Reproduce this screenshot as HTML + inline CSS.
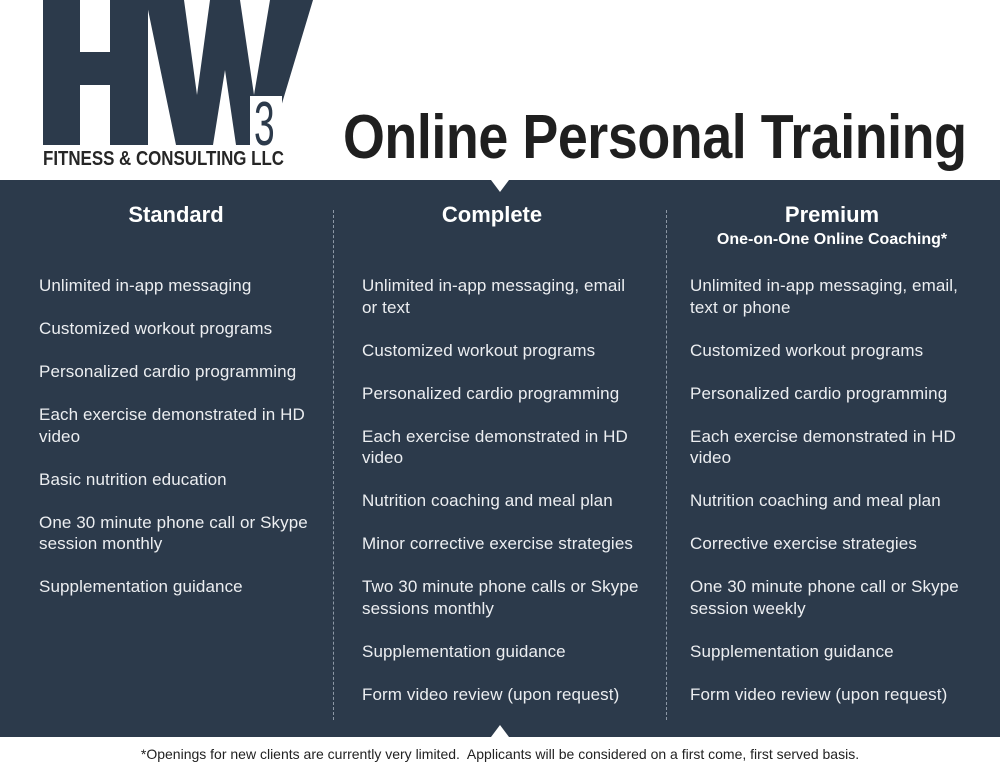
<!DOCTYPE html>
<html><head><meta charset="utf-8"><style>
*{margin:0;padding:0;box-sizing:border-box}
body{width:1000px;height:773px;background:#fff;position:relative;overflow:hidden;font-family:"Liberation Sans",sans-serif}
.band{position:absolute;left:0;top:180px;width:1000px;height:557px;background:#2c3a4b}
.tri{position:absolute;width:0;height:0;border-left:9px solid transparent;border-right:9px solid transparent}
.dash{position:absolute;top:210px;height:510px;width:0;border-left:1.5px dashed #8d98a6}
.col{position:absolute;top:275px;color:#eceef1;font-size:17px;line-height:21.5px;white-space:nowrap;letter-spacing:0.1px}
.col p{margin-bottom:21.5px}
.h{position:absolute;color:#fff;font-weight:bold;font-size:22px;text-align:center;width:300px}
.title{position:absolute;left:343px;top:102px;font-size:62px;font-weight:bold;color:#1f1f1f;transform:scaleX(0.868);transform-origin:left top;white-space:nowrap;letter-spacing:-0.5px}
.sub{position:absolute;left:43px;top:148px;font-size:20px;font-weight:bold;color:#262626;transform:scaleX(0.845);transform-origin:left top;white-space:nowrap}
.foot{position:absolute;top:746px;left:0;width:1000px;text-align:center;font-size:14px;color:#222;white-space:pre}
</style></head><body>
<svg style="position:absolute;left:0;top:0" width="340" height="150">
<g fill="#2c3a4b">
<rect x="43" y="0" width="37" height="145"/>
<rect x="110" y="0" width="38" height="145"/>
<rect x="78" y="52" width="34" height="33"/>
<polygon points="146,0 184,0 197,95 210,0 240,0 254,95 270,0 313,0 283,100 270,145 236,145 225,70 213,145 176,145"/>
</g>
<rect x="250" y="96" width="32" height="50" fill="#fff"/>
<text transform="translate(254,145) scale(0.6,1)" font-family="Liberation Sans" font-size="62" fill="#2c3a4b">3</text>
</svg>
<div class="sub">FITNESS &amp; CONSULTING LLC</div>
<div class="title">Online Personal Training</div>
<div class="band"></div>
<div class="tri" style="left:491px;top:180px;border-top:12px solid #fff"></div>
<div class="tri" style="left:491px;top:725px;border-bottom:12px solid #fff"></div>
<div class="dash" style="left:333px"></div>
<div class="dash" style="left:666px"></div>
<div class="h" style="left:26px;top:202px">Standard</div>
<div class="h" style="left:342px;top:202px">Complete</div>
<div class="h" style="left:682px;top:202px">Premium</div>
<div class="h" style="left:682px;top:231px;font-size:16px">One-on-One Online Coaching*</div>
<div class="col" style="left:39px">
<p>Unlimited in-app messaging</p>
<p>Customized workout programs</p>
<p>Personalized cardio programming</p>
<p>Each exercise demonstrated in HD<br>video</p>
<p>Basic nutrition education</p>
<p>One 30 minute phone call or Skype<br>session monthly</p>
<p>Supplementation guidance</p>
</div>
<div class="col" style="left:362px">
<p>Unlimited in-app messaging, email<br>or text</p>
<p>Customized workout programs</p>
<p>Personalized cardio programming</p>
<p>Each exercise demonstrated in HD<br>video</p>
<p>Nutrition coaching and meal plan</p>
<p>Minor corrective exercise strategies</p>
<p>Two 30 minute phone calls or Skype<br>sessions monthly</p>
<p>Supplementation guidance</p>
<p>Form video review (upon request)</p>
</div>
<div class="col" style="left:690px">
<p>Unlimited in-app messaging, email,<br>text or phone</p>
<p>Customized workout programs</p>
<p>Personalized cardio programming</p>
<p>Each exercise demonstrated in HD<br>video</p>
<p>Nutrition coaching and meal plan</p>
<p>Corrective exercise strategies</p>
<p>One 30 minute phone call or Skype<br>session weekly</p>
<p>Supplementation guidance</p>
<p>Form video review (upon request)</p>
</div>
<div class="foot">*Openings for new clients are currently very limited.  Applicants will be considered on a first come, first served basis.</div>
</body></html>
